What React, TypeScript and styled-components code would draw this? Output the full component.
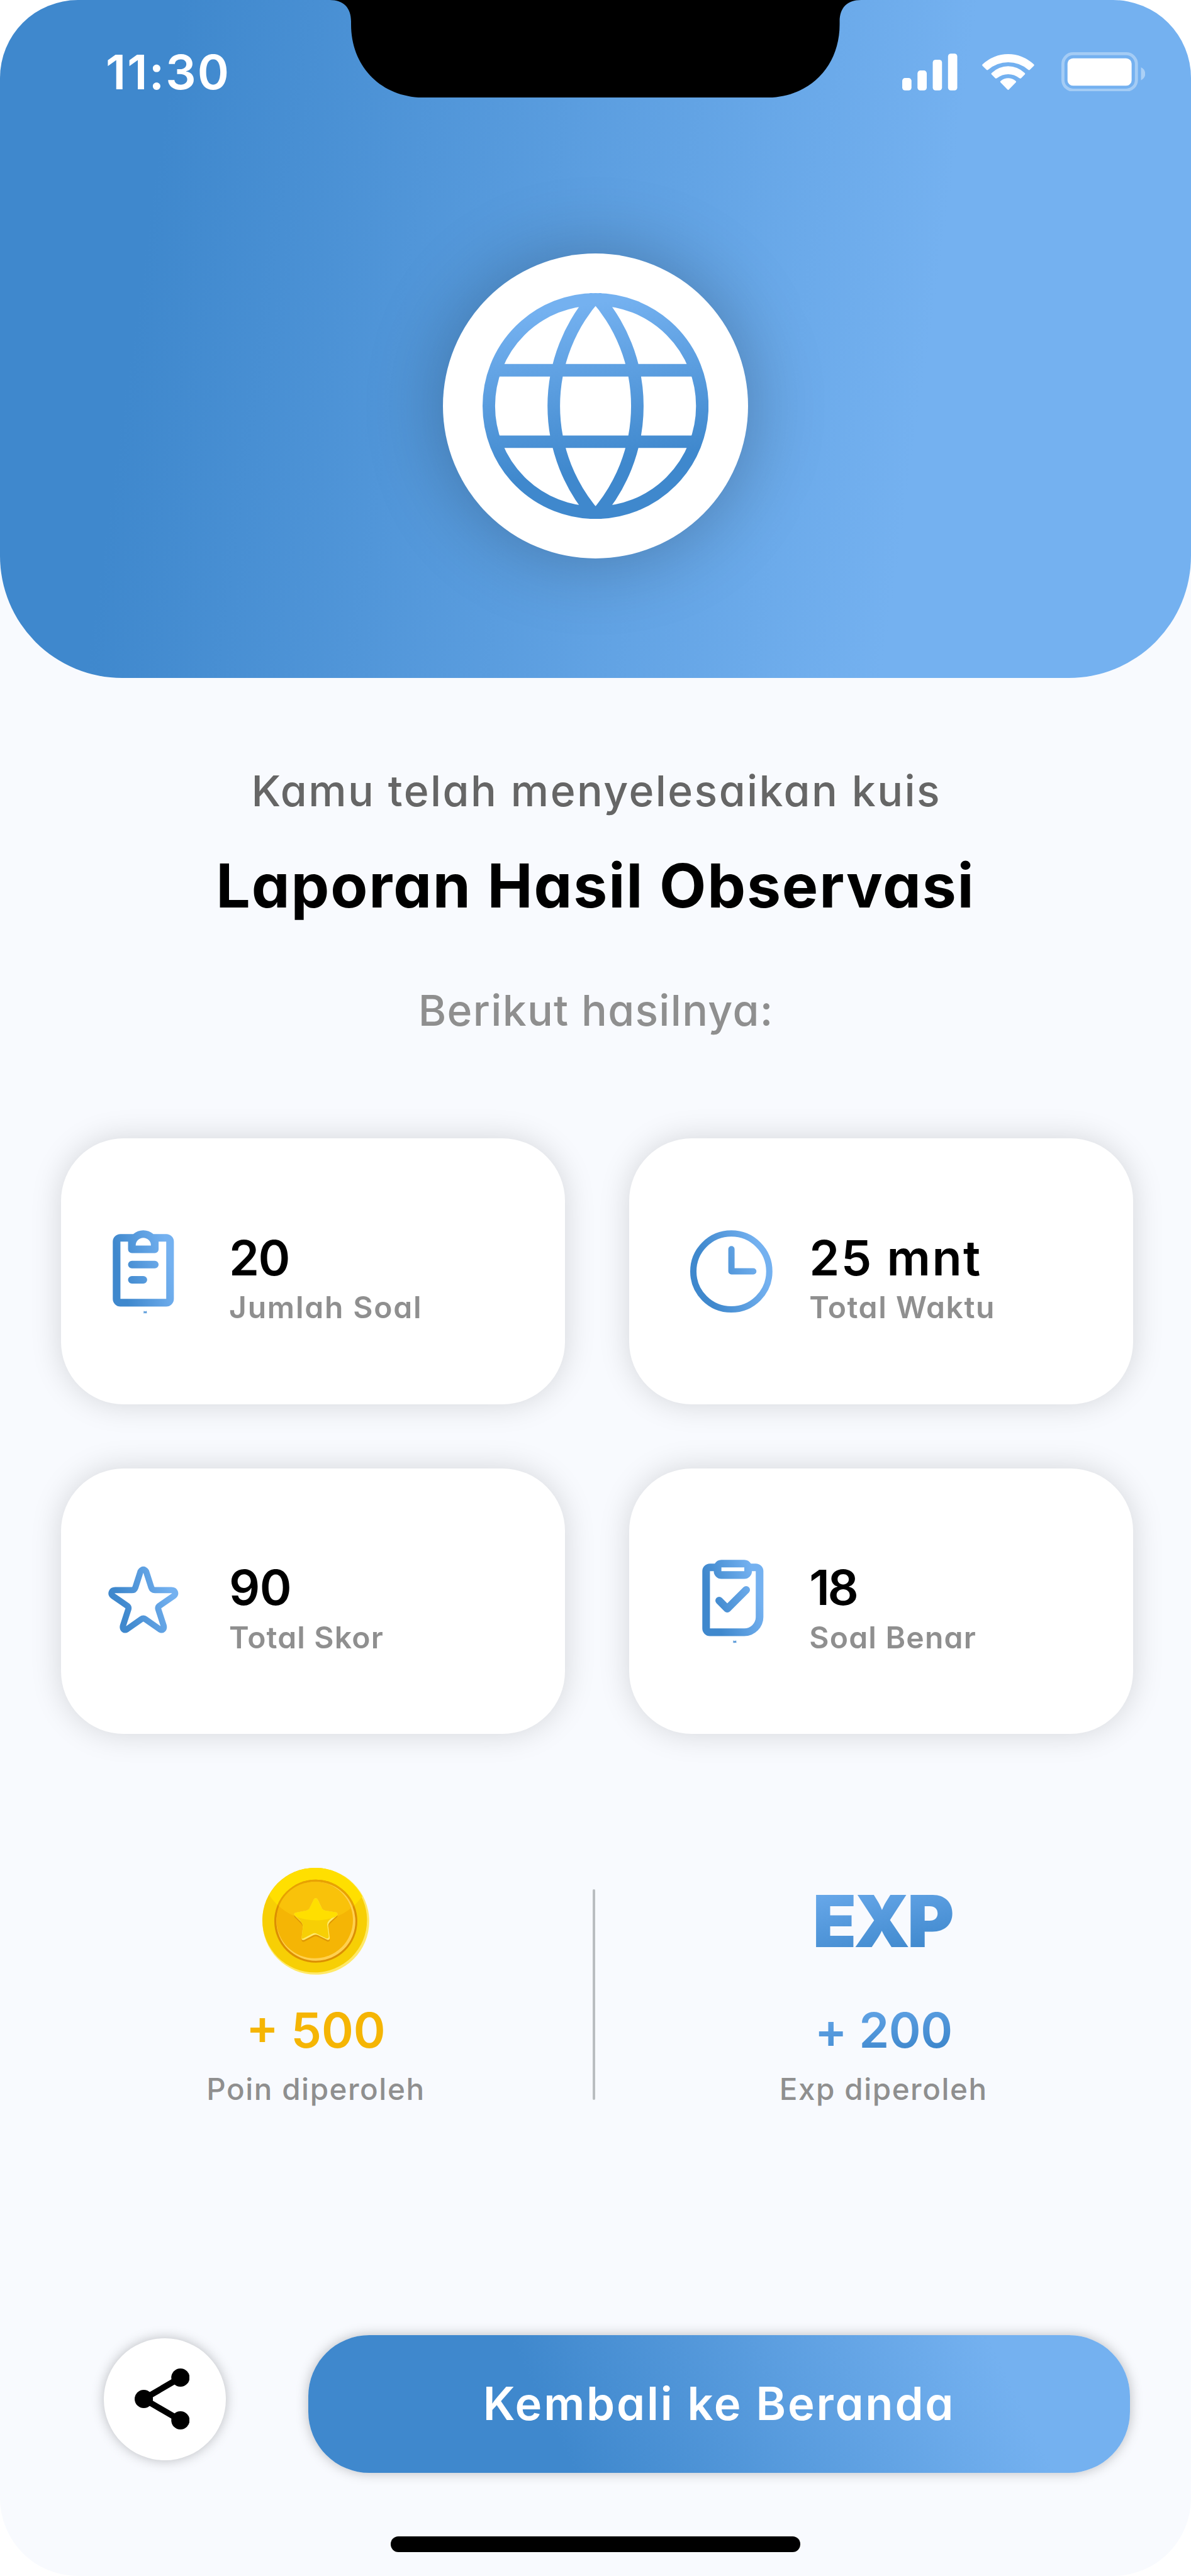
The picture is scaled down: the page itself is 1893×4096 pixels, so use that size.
import React from "react";
import styled, { createGlobalStyle, css } from "styled-components";

/* 1rem is one point of the 390 x 844 phone canvas. */
const GlobalStyle = createGlobalStyle`
  html { font-size: 4.8538px; }
  body { margin: 0; background: #ffffff; overflow: hidden; }
  * { box-sizing: border-box; }
`;

const DARK = "#3f88cd";
const LIGHT = "#74b1f0";

const Screen = styled.main`
  position: relative;
  display: flex;
  flex-direction: column;
  width: 390rem;
  height: 4096px;
  overflow: hidden;
  border-radius: 25.5rem;
  background: #f8fafe;
  font-family: "Inter", "Liberation Sans", sans-serif;
  font-feature-settings: "cv11" 1;
`;

const Header = styled.header`
  display: flex;
  flex-direction: column;
  align-items: center;
  flex: none;
  height: 222rem;
  border-radius: 0 0 40rem 40rem;
  background: linear-gradient(98deg, ${DARK} 14%, ${LIGHT} 76%);
`;

const StatusBar = styled.div`
  display: flex;
  align-items: center;
  justify-content: space-between;
  width: 100%;
  height: 47rem;
  padding: 0 15rem 0 34.6rem;
`;

const Clock = styled.time`
  color: #ffffff;
  font-size: 15.7rem;
  font-weight: 600;
  line-height: 20rem;
  letter-spacing: 0.45rem;
`;

const StatusIcons = styled.div`
  display: flex;
  align-items: center;
`;

const Glyph = styled.svg<{ $w: number; $h: number; $ml?: number }>`
  display: block;
  flex: none;
  width: ${(p) => p.$w}rem;
  height: ${(p) => p.$h}rem;
  margin-left: ${(p) => p.$ml ?? 0}rem;
`;

const Notch = styled.svg`
  position: absolute;
  top: 0;
  left: 108rem;
  width: 174rem;
  height: 32rem;
`;

const Medallion = styled.div`
  display: flex;
  align-items: center;
  justify-content: center;
  width: 100rem;
  height: 100rem;
  margin-top: 36rem;
  border-radius: 50%;
  background: #ffffff;
  box-shadow: 0 0 25rem rgba(0, 0, 0, 0.25);
`;

const Intro = styled.section`
  display: flex;
  flex-direction: column;
  align-items: center;
  flex: none;
  height: 151rem;
  padding-top: 27rem;
`;

const IntroLine = styled.p<{ $color: string; $spacing: number }>`
  margin: 0;
  padding-left: ${(p) => p.$spacing}rem;
  color: ${(p) => p.$color};
  font-size: 14rem;
  font-weight: 500;
  line-height: 20rem;
  letter-spacing: ${(p) => p.$spacing}rem;
  white-space: nowrap;
`;

const Title = styled.h1`
  margin: 6rem 0 15.9rem;
  color: #000000;
  font-size: 19.9rem;
  font-weight: 700;
  line-height: 30rem;
  letter-spacing: 0.38rem;
  white-space: nowrap;
`;

const Stats = styled.section`
  display: grid;
  grid-template-columns: 165rem 165rem;
  grid-auto-rows: 87rem;
  gap: 21rem;
  flex: none;
  padding-left: 20rem;
`;

const Card = styled.article<{ $inset: number; $gap: number }>`
  display: flex;
  align-items: flex-start;
  gap: ${(p) => p.$gap}rem;
  padding: 27.5rem 0 0 ${(p) => p.$inset}rem;
  border-radius: 20.5rem;
  background: #ffffff;
  box-shadow: 0 0 10rem rgba(0, 0, 0, 0.15);
`;

const CardText = styled.div`
  display: flex;
  flex-direction: column;
  padding-top: 1.7rem;
`;

const valueType = css`
  font-size: 15.9rem;
  font-weight: 600;
  line-height: 20rem;
  white-space: nowrap;
`;

const CardValue = styled.strong<{ $spacing: number }>`
  ${valueType}
  color: #000000;
  letter-spacing: ${(p) => p.$spacing}rem;
`;

const CardLabel = styled.span<{ $spacing: number }>`
  margin-top: -1.2rem;
  color: #8f8f8f;
  font-size: 9.9rem;
  font-weight: 600;
  line-height: 15rem;
  letter-spacing: ${(p) => p.$spacing}rem;
  white-space: nowrap;
`;

const Rewards = styled.section`
  display: grid;
  grid-template-columns: 194rem 1rem 195rem;
  flex: none;
  height: 84rem;
  margin-top: 44rem;
`;

const Reward = styled.div<{ $pl?: number; $pr?: number }>`
  display: flex;
  flex-direction: column;
  align-items: center;
  padding-left: ${(p) => p.$pl ?? 0}rem;
  padding-right: ${(p) => p.$pr ?? 0}rem;
`;

const Divider = styled.div`
  width: 1rem;
  height: 69rem;
  margin-top: 7rem;
  border-radius: 1rem;
  background: #babec1;
`;

const blueText = css`
  color: transparent;
  background-clip: text;
  -webkit-background-clip: text;
`;

const ExpMark = styled.span`
  ${blueText}
  background-image: linear-gradient(168deg, #6eadee 10%, ${DARK} 78%);
  font-size: 23.4rem;
  font-weight: 900;
  line-height: 35rem;
  letter-spacing: -0.9rem;
  padding-right: 0.9rem;
`;

const RewardValue = styled.strong<{ $blue?: boolean }>`
  ${valueType}
  margin-top: 8.1rem;
  color: #f5b504;
  letter-spacing: 0;
  ${(p) =>
    p.$blue &&
    css`
      ${blueText}
      letter-spacing: -0.1rem;
      background-image: linear-gradient(170deg, #6eadee 0%, ${DARK} 80%);
    `}
`;

const RewardLabel = styled.span`
  margin-top: 1.9rem;
  color: #8f8f8f;
  font-size: 9.8rem;
  font-weight: 500;
  line-height: 15rem;
  letter-spacing: 0.32rem;
`;

const Actions = styled.footer`
  display: flex;
  align-items: flex-start;
  gap: 27rem;
  flex: none;
  margin-top: 69rem;
  padding-left: 34rem;
`;

const ShareButton = styled.button`
  display: flex;
  align-items: center;
  justify-content: center;
  width: 40rem;
  height: 40rem;
  margin: 1rem 0 0;
  padding: 0 2rem 0 0;
  border: 0;
  border-radius: 50%;
  background: #ffffff;
  box-shadow: 0 0 4rem rgba(0, 0, 0, 0.25);
`;

const HomeButton = styled.button`
  width: 269rem;
  height: 45rem;
  margin: 0;
  padding: 0;
  border: 0;
  border-radius: 20rem;
  color: #ffffff;
  background: linear-gradient(64deg, ${DARK} 30%, ${LIGHT} 84%);
  box-shadow: 0 0 4rem rgba(0, 0, 0, 0.25);
  font-family: inherit;
  font-feature-settings: inherit;
  font-size: 14.9rem;
  font-weight: 600;
  line-height: 45rem;
  letter-spacing: 0.58rem;
`;

const HomeIndicator = styled.div`
  flex: none;
  align-self: center;
  width: 134rem;
  height: 5rem;
  margin-top: 21rem;
  border-radius: 2.5rem;
  background: #000000;
`;

const MINI_DOT =
  "M12.593 23.258l-.011.002-.071.035-.02.004-.014-.004-.071-.035c-.01-.004-.019-.001-.024.005l-.004.01-.017.428.005.02.01.013.104.074.015.004.012-.004.104-.074.012-.016.004-.017-.017-.427c-.002-.01-.009-.017-.017-.018m.265-.113l-.013.002-.185.093-.01.01-.003.011.018.43.005.012.008.007.201.093c.012.004.023 0 .029-.008l.004-.014-.034-.614c-.003-.012-.01-.02-.02-.022m-.715.002a.023.023 0 0 0-.027.006l-.006.014-.034.614c0 .012.007.02.017.024l.015-.002.201-.093.01-.008.004-.011.017-.43-.003-.012-.01-.01z";

function BlueGradient({ id, x1, x2, y1, y2 }: { id: string; x1: number; x2: number; y1: number; y2: number }) {
  return (
    <linearGradient id={id} gradientUnits="userSpaceOnUse" x1={x1} y1={y1} x2={x2} y2={y2}>
      <stop offset="0" stopColor={DARK} />
      <stop offset="1" stopColor={LIGHT} />
    </linearGradient>
  );
}

function ClipboardIcon() {
  return (
    <Glyph $w={30} $h={30} viewBox="0 0 24 24" fill="url(#gClip)">
      <BlueGradient id="gClip" x1={6} y1={13} x2={19} y2={10} />
      <path d={MINI_DOT} />
      <path
        fillRule="evenodd"
        d="M12 2a4 4 0 0 1 2.646 1H18a2 2 0 0 1 2 2v15a2 2 0 0 1-2 2H6a2 2 0 0 1-2-2V5a2 2 0 0 1 2-2h3.354A4 4 0 0 1 12 2M8 5H6v15h12V5h-2v2a1 1 0 0 1-1 1H9a1 1 0 0 1-1-1zm4-1a2 2 0 0 0-2 2h4a2 2 0 0 0-2-2"
      />
      <path d="M9 10h6a1 1 0 1 1 0 2H9a1 1 0 1 1 0-2M9 14h3a1 1 0 1 1 0 2H9a1 1 0 1 1 0-2" />
    </Glyph>
  );
}

function ClockIcon() {
  return (
    <Glyph $w={30} $h={30} viewBox="0 0 150 150" fill="none" stroke="url(#gClock)" strokeWidth={10.3}>
      <BlueGradient id="gClock" x1={32} y1={95} x2={125} y2={70} />
      <circle cx="72.5" cy="80" r="62.2" />
      <path d="M72.7 43.5V79.8H108.5" strokeLinecap="round" strokeLinejoin="round" />
    </Glyph>
  );
}

function StarIcon() {
  return (
    <Glyph $w={30} $h={30} viewBox="160 2542.5 150 150" fill="none" stroke="url(#gStar)" strokeWidth={10}>
      <BlueGradient id="gStar" x1={200} y1={2635} x2={283} y2={2612} />
      <path
        strokeLinejoin="round"
        d="M230.3 2574.5Q235 2567.5 239.7 2574.5L248 2600.3Q249.5 2604.8 254 2604.8L281 2604.8C287 2604.8 289 2610.5 285 2614L261.5 2630.2Q258.5 2632.5 259.5 2636L268.3 2663C269.5 2668.5 266 2671.5 261.8 2668.8L238.5 2652.5Q235 2650 231.5 2652.5L208.2 2668.8C204 2671.5 200.5 2668.5 201.7 2663L210.5 2636Q211.5 2632.5 208.5 2630.2L185 2614C181 2610.5 183 2604.8 189 2604.8L216 2604.8Q220.5 2604.8 222 2600.3Z"
      />
    </Glyph>
  );
}

function TaskIcon() {
  return (
    <Glyph $w={30} $h={30} viewBox="0 0 24 24" fill="url(#gTask)">
      <BlueGradient id="gTask" x1={6.5} y1={13} x2={18.5} y2={9.5} />
      <path d={MINI_DOT} />
      <path
        fillRule="evenodd"
        d="M15 2a2 2 0 0 1 1.732 1H18a2 2 0 0 1 2 2v12a5 5 0 0 1-5 5H6a2 2 0 0 1-2-2V5a2 2 0 0 1 2-2h1.268A2 2 0 0 1 9 2zM7 5H6v15h9a3 3 0 0 0 3-3V5h-1a2 2 0 0 1-2 2H9a2 2 0 0 1-2-2m8-1H9v1h6z"
      />
      <path d="M8.42 12.7l2.12 2.13 4.95-4.95" fill="none" stroke="url(#gTask)" strokeWidth={2} strokeLinecap="round" strokeLinejoin="round" />
    </Glyph>
  );
}

function GlobeIcon() {
  return (
    <Glyph $w={74} $h={74} viewBox="-185 -185 370 370" fill="none" stroke="url(#gGlobe)" strokeWidth={20.5}>
      <BlueGradient id="gGlobe" x1={20} y1={100} x2={-25} y2={-165} />
      <circle r="174.75" />
      <path d="M0 -180A271 271 0 0 0 0 180A271 271 0 0 0 0 -180M-166 -58.5H166M-166 58.5H166" />
    </Glyph>
  );
}

const COIN_STAR =
  "M292 179Q299 179 302 186L322 228Q327 238 340 240L392 249Q402 252 398 263L362 296Q352 306 354 320L361 372Q362 386 350 384L303 361Q292 355 281 361L236 384Q222 388 223 374L229 320Q230 306 220 296L188 264Q182 252 193 250L244 240Q257 238 262 228L282 186Q285 179 292 179Z";

function CoinIcon() {
  return (
    <Glyph $w={35} $h={35} viewBox="30 30 525 525">
      <clipPath id="coinShine">
        <circle cx="294" cy="12" r="276" />
      </clipPath>
      <clipPath id="coinStar">
        <path d={COIN_STAR} />
      </clipPath>
      <circle cx="292.5" cy="292.5" r="262.5" fill="#ffe968" />
      <circle cx="287" cy="287" r="257" fill="#f7cf05" />
      <circle cx="290" cy="290" r="260" fill="#ffdf00" clipPath="url(#coinShine)" />
      <circle cx="292.5" cy="292" r="204" fill="#dc8f02" />
      <circle cx="292.5" cy="292" r="204" fill="#e8a202" clipPath="url(#coinShine)" />
      <circle cx="293" cy="292.5" r="194" fill="#ffd04f" />
      <circle cx="287" cy="286.5" r="188" fill="#f5b505" />
      <circle cx="287" cy="286.5" r="188" fill="#f9c20a" clipPath="url(#coinShine)" />
      <path d={COIN_STAR} transform="translate(0 8)" fill="#df9803" />
      <path d={COIN_STAR} fill="#ffe968" />
      <g clipPath="url(#coinStar)">
        <path d={COIN_STAR} transform="translate(-5 -7)" fill="#f7cf05" />
        <path d={COIN_STAR} fill="#ffdf00" clipPath="url(#coinShine)" />
      </g>
    </Glyph>
  );
}

function ShareIcon() {
  return (
    <Glyph $w={18} $h={20} viewBox="3 2 18 20">
      <path d="M18 5L6 12l12 7" fill="none" stroke="#000" strokeWidth={2} />
      <circle cx="18" cy="5" r="3" />
      <circle cx="6" cy="12" r="3" />
      <circle cx="18" cy="19" r="3" />
    </Glyph>
  );
}

function StatusGlyphs() {
  return (
    <StatusIcons>
      <Glyph $w={18.07} $h={12.93} viewBox="82 75 271 194" fill="#fff">
        <rect x="82" y="202" width="45.5" height="61" rx="14" />
        <rect x="157" y="165" width="45.5" height="98" rx="14" />
        <rect x="232" y="112" width="45.5" height="151" rx="14" />
        <rect x="307" y="82" width="45.5" height="181" rx="14" />
      </Glyph>
      <Glyph $w={17.07} $h={12.93} $ml={8} viewBox="473 75 256 194" fill="#fff">
        <path d="M476 134A182 182 0 0 1 726 134Q731 138 727 142L708 161Q704 165 699 161A150 150 0 0 0 503 161Q498 165 494 161L475 142Q471 138 476 134Z" />
        <path d="M521 176A115 115 0 0 1 681 176Q687 180 683 184L664 203Q660 206 655 202A87 87 0 0 0 547 202Q542 206 538 203L519 184Q515 180 521 176Z" />
        <path d="M566 215A56 56 0 0 1 636 215Q643 220 638 224L604 259Q601 262 598 259L564 224Q559 220 566 215Z" />
      </Glyph>
      <Glyph $w={27.47} $h={12.93} $ml={8.93} viewBox="863 75 412 194" fill="#fff">
        <rect x="870.5" y="82.5" width="361" height="179" rx="50" fill="none" stroke="#fff" strokeWidth={15} opacity={0.35} />
        <rect x="893" y="105" width="315" height="135" rx="27" />
        <path d="M1254 149Q1275 160 1275 181T1254 213Z" opacity={0.4} />
      </Glyph>
    </StatusIcons>
  );
}

const stats = [
  { icon: <ClipboardIcon />, value: "20", label: "Jumlah Soal", vs: -0.3, ls: 0.37 },
  { icon: <ClockIcon />, value: "25 mnt", label: "Total Waktu", vs: 0.5, ls: 0.32 },
  { icon: <StarIcon />, value: "90", label: "Total Skor", vs: -0.1, ls: 0.24 },
  { icon: <TaskIcon />, value: "18", label: "Soal Benar", vs: -0.7, ls: 0.25 },
];

export default function App() {
  return (
    <>
      <GlobalStyle />
      <Screen>
        <Header>
          <StatusBar>
            <Clock>11:30</Clock>
            <StatusGlyphs />
          </StatusBar>
          <Medallion>
            <GlobeIcon />
          </Medallion>
        </Header>
        <Notch viewBox="108 0 174 32">
          <path d="M108 0C112.5 0 115 2.5 115 7V8C115 22 125 32 139 32H251C265 32 275 22 275 8V7C275 2.5 277.5 0 282 0Z" />
        </Notch>

        <Intro>
          <IntroLine $color="#666666" $spacing={0.5}>Kamu telah menyelesaikan kuis</IntroLine>
          <Title>Laporan Hasil Observasi</Title>
          <IntroLine $color="#8f8f8f" $spacing={0.27}>Berikut hasilnya:</IntroLine>
        </Intro>

        <Stats>
          {stats.map((s, i) => (
            <Card key={s.label} $inset={i % 2 ? 19 : 12} $gap={i % 2 ? 10 : 13}>
              {s.icon}
              <CardText>
                <CardValue $spacing={s.vs}>{s.value}</CardValue>
                <CardLabel $spacing={s.ls}>{s.label}</CardLabel>
              </CardText>
            </Card>
          ))}
        </Stats>

        <Rewards>
          <Reward $pl={12.8}>
            <CoinIcon />
            <RewardValue>+ 500</RewardValue>
            <RewardLabel>Poin diperoleh</RewardLabel>
          </Reward>
          <Divider />
          <Reward $pr={6.4}>
            <ExpMark>EXP</ExpMark>
            <RewardValue $blue>+ 200</RewardValue>
            <RewardLabel>Exp diperoleh</RewardLabel>
          </Reward>
        </Rewards>

        <Actions>
          <ShareButton aria-label="Bagikan">
            <ShareIcon />
          </ShareButton>
          <HomeButton>Kembali ke Beranda</HomeButton>
        </Actions>
        <HomeIndicator />
      </Screen>
    </>
  );
}
